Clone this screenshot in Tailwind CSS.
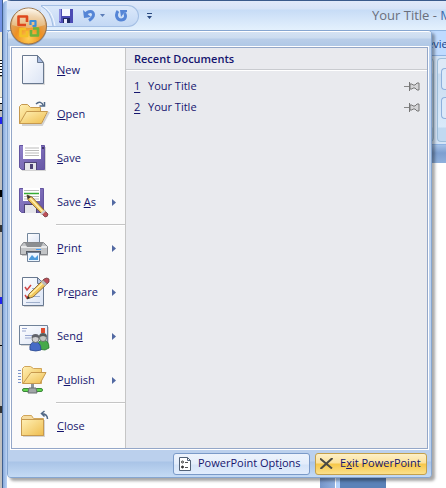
<!DOCTYPE html>
<html lang="en">
<head>
    <meta charset="UTF-8">
    <meta name="viewport" content="width=device-width, initial-scale=1.0">
    <title>Your Title - Microsoft PowerPoint</title>
    <script src="https://cdn.jsdelivr.net/npm/@tailwindcss/browser@4"></script>
</head>
<body class="relative h-screen overflow-hidden bg-white font-['Open_Sans','Noto_Sans',sans-serif] text-[11px] text-[#15156e]">
    <div class="flex h-full">
        <!-- Strip of the window behind -->
        <div class="flex w-[3px] shrink-0 flex-col overflow-hidden border-r border-[#3f5f8f] bg-[#c0c0c0]">
            <div class="h-[32px] shrink-0 bg-[#7393e6]"></div>
            <div class="h-[28px] shrink-0 bg-[#ece9d8]"></div>
            <div class="h-[16px] shrink-0 bg-[repeating-linear-gradient(#111_0_1px,#fff_1px_3px)]"></div>
            <div class="h-[22px] shrink-0 border-y border-[#aca899] bg-[#ece9d8]"></div>
            <div class="h-[5px] shrink-0 bg-white"></div>
            <div class="h-[8px] shrink-0 border-y border-black"></div>
            <div class="mt-[6px] h-[7px] shrink-0 bg-[#2222ee]"></div>
            <div class="mt-[66px] h-[7px] shrink-0 bg-black"></div>
            <div class="mt-[28px] h-[7px] shrink-0 bg-[#333]"></div>
            <div class="mt-[65px] h-[7px] shrink-0 bg-[#2222ee]"></div>
            <div class="mt-[41px] h-px shrink-0 bg-black"></div>
            <div class="mt-[60px] h-[7px] shrink-0 bg-[#333]"></div>
        </div>

        <!-- PowerPoint window -->
        <div class="flex min-w-0 flex-1 rounded-tl-lg border-t border-[#3a5a8c]">
            <div class="w-[4px] shrink-0 rounded-tl-lg bg-[linear-gradient(90deg,#88a9da,#bcd4f5)]"></div>
            <div class="flex min-w-0 flex-1 flex-col">
                <header class="flex h-[30px] shrink-0 items-center overflow-hidden border-b border-[#8fb4df] bg-[linear-gradient(#e1e9fa_0,#d6e3f8_8px,#c7dcf6_9px,#e4f1fd_100%)]">
                    <div class="ml-[34px] flex h-[22px] items-center gap-[10px] rounded-r-full border border-l-0 border-[#a4bfe4] bg-[linear-gradient(#dbe8fa,#c3d8f4)] pr-[10px]">
                        <svg class="-mr-[10px] h-[20px] w-[18px]" viewBox="0 0 18 20" fill="none">
                            <path d="M0 0q10 5 12 20H0z" fill="#dce8fa"/>
                            <path d="M0 0q10 5 12 20" stroke="#9fbbe2"/>
                            <path d="M2 0q10 5 12 20" stroke="#f3f8ff"/>
                        </svg>
                        <button type="button" aria-label="Save">
                            <svg class="size-[14px]" viewBox="0 0 14 14">
                                <path d="M0 0h14v14H1L0 13z" fill="#4b4bb4"/>
                                <path d="M0 0h2v13l-2-1z" fill="#8d8ee0"/>
                                <path d="M3 0h8v7H3z" fill="#f7f9ff"/>
                                <path d="M4 9h7v5H4z" fill="#1f2a63"/>
                                <path d="M5 10h3v4H5z" fill="#eef"/>
                            </svg>
                        </button>
                        <button type="button" aria-label="Undo" class="flex items-center gap-[4px]">
                            <svg class="size-[13px]" viewBox="0 0 13 13" fill="none">
                                <path d="M2 6C5 1.500 10.500 1.500 10.500 5.500C10.500 8 9 9.500 6 11.500" stroke="#5585d6" stroke-width="3"/>
                                <path d="M0 1l1 8 7-1z" fill="#5585d6"/>
                            </svg>
                            <svg class="h-[3px] w-[5px]" viewBox="0 0 5 3"><path d="M0 0h5L2.500 3z" fill="#5b7cb8"/></svg>
                        </button>
                        <button type="button" aria-label="Repeat">
                            <svg class="size-[13px]" viewBox="0 0 13 13" fill="none">
                                <path d="M3 2C0 6 2 11 6 11C10.500 11 11.500 7 9.500 4" stroke="#5585d6" stroke-width="3"/>
                                <path d="M5 1h7v2l-3 1-3 4z" fill="#5585d6"/>
                            </svg>
                        </button>
                    </div>
                    <button type="button" aria-label="Customize toolbar" class="ml-[8px]">
                        <svg class="h-[6px] w-[5px]" viewBox="0 0 5 6"><path d="M0 0h5v1H0zM0 3h5L2.500 6z" fill="#2a4a80"/></svg>
                    </button>
                    <h1 class="ml-auto w-[74px] overflow-hidden text-[13px] whitespace-nowrap text-[#6a6f7c]">Your Title - <span class="text-[#3e6aaa]">M</span></h1>
                </header>
                <nav class="flex h-[24px] shrink-0 items-center justify-end bg-[#bfdbff] pt-[2px]">
                    <a href="#" class="w-[19px] overflow-hidden whitespace-nowrap text-[#15428b]">eview</a>
                </nav>
                <!-- Ribbon -->
                <div class="flex h-[90px] shrink-0 justify-end gap-[3px] border-y border-[#8db2e3] bg-[#d3e4f7] py-[2px]">
                    <div class="flex-1 rounded-r-sm border border-[#9ebfdb] bg-[linear-gradient(#dde9f7_0,#dde9f7_14px,#c9dcf0_15px,#d9eafa_68px,#c0d9f1_69px)]"></div>
                    <div class="flex w-[9px] flex-col gap-[7px] rounded-l-sm border border-r-0 border-[#9ebfdb] bg-[linear-gradient(#dde9f7_0,#dde9f7_14px,#c9dcf0_15px,#d9eafa_68px,#c0d9f1_69px)] pt-[9px] pl-[3px]">
                        <button type="button" aria-label="Font" class="h-[22px] rounded-l-sm border border-r-0 border-[#8fb0dc] bg-[#dce9f9]"></button>
                        <button type="button" aria-label="Paragraph" class="h-[22px] rounded-l-sm border border-r-0 border-[#8fb0dc] bg-[#dce9f9]"></button>
                    </div>
                </div>
                <div class="h-[18px] shrink-0 bg-[linear-gradient(#a4c2e8,#7d9fd0_8px,#8fb0dc)]"></div>
                <main class="flex flex-1 flex-col justify-end">
                    <div class="flex h-[12px] justify-end pr-[60px]">
                        <div class="w-[15px] bg-[linear-gradient(90deg,#7595c8,#90b0df)]"></div>
                        <div class="w-[5px] border-l border-white bg-[#b3d2fb]"></div>
                        <div class="w-[46px] bg-[#5b82b8]"></div>
                    </div>
                </main>
            </div>
        </div>
    </div>

    <!-- Office menu -->
    <section class="absolute top-[30px] right-[14px] left-[7px] flex flex-col rounded-[4px] border border-[#86a6d0] bg-[#bdd2ee] shadow-[3px_3px_3px_rgba(0,0,0,0.35)]">
        <div class="h-[15px] rounded-t-[3px] border-t border-white bg-[linear-gradient(#d4e2f3_0,#cbdcf0_6px,#b9cee9_7px,#b0c8e6_100%)]"></div>
        <div class="mx-[2px] border border-white">
            <div class="flex border border-[#94a7c8]">
                <ul class="w-[114px] shrink-0 border-r border-[#c5c5c5] bg-[#fafafa]">
                    <li><button type="button" class="flex h-[44px] w-full items-center gap-[7px] pl-[6px]">
                        <svg class="size-[32px]" viewBox="0 0 32 32">
                            <defs>
                                <linearGradient id="paper" x1="0" y1="0" x2="1" y2="1"><stop offset="0" stop-color="#fff"/><stop offset="1" stop-color="#dbe4f5"/></linearGradient>
                                <linearGradient id="folder" x1="0" y1="0" x2="1" y2="1"><stop offset="0" stop-color="#fff0b5"/><stop offset="1" stop-color="#eebd4e"/></linearGradient>
                                <linearGradient id="disk" x1="0" y1="0" x2="1" y2="1"><stop offset="0" stop-color="#9182cb"/><stop offset="1" stop-color="#6656a4"/></linearGradient>
                            </defs>
                            <path d="M5 3h15l7 7v21H5z" fill="#aaa" opacity=".4"/>
                            <path d="M4.500 1.500h15l6 7v21h-21z" fill="url(#paper)" stroke="#68788f"/>
                            <path d="M19.500 1.500v7h6z" fill="#a8bbe0" stroke="#68788f"/>
                        </svg>
                        <span><u>N</u>ew</span>
                    </button></li>
                    <li><button type="button" class="flex h-[44px] w-full items-center gap-[7px] pl-[6px]">
                        <svg class="size-[32px]" viewBox="0 0 32 32">
                            <path d="M4 27h20l7-13" fill="none" stroke="#aaa" stroke-width="2" opacity=".5"/>
                            <path d="M1.500 25.500v-17l2-2h6l3 3h10v16z" fill="url(#folder)" stroke="#c6994e"/>
                            <path d="M1.500 25.500l7-12h21l-6 12z" fill="url(#folder)" stroke="#c6994e"/>
                            <path d="M18 6c3-3 6-2 7.500 2" fill="none" stroke="#526987" stroke-width="1.500"/>
                            <path d="M21.500 8h5V4" fill="none" stroke="#526987" stroke-width="1.500"/>
                        </svg>
                        <span><u>O</u>pen</span>
                    </button></li>
                    <li><button type="button" class="flex h-[44px] w-full items-center gap-[7px] pl-[6px]">
                        <svg class="size-[32px]" viewBox="0 0 32 32">
                            <path d="M4 5h24v24H4z" fill="#999" opacity=".4"/>
                            <path d="M1.500 3.500h25v24h-23l-2-2z" fill="url(#disk)" stroke="#6455a0"/>
                            <path d="M5 3h18v14H5z" fill="#fff"/>
                            <path d="M7 6h14M7 8.500h14M7 11h14M7 13.500h14" stroke="#bbb"/>
                            <path d="M6 20h13v8H6z" fill="#4e4375"/>
                            <path d="M7 21h11v7H7z" fill="#e5e5ea"/>
                            <path d="M12 22h3v5h-3z" fill="#4e4375"/>
                            <path d="M24 5h2v2h-2z" fill="#40356b"/>
                        </svg>
                        <span><u>S</u>ave</span>
                    </button></li>
                    <li><button type="button" class="flex h-[44px] w-full items-center gap-[7px] pl-[6px]">
                        <svg class="size-[32px]" viewBox="0 0 32 32">
                            <path d="M1.500 2.500h24v24h-22l-2-2z" fill="url(#disk)" stroke="#6455a0"/>
                            <path d="M5 2h17v13H5z" fill="#fff"/>
                            <path d="M6 7.500h15" stroke="#35ac35" stroke-width="1.500"/>
                            <path d="M6 4.500h15M6 10.500h15M6 13h15" stroke="#bbb"/>
                            <path d="M6 18h13v9H6z" fill="#4e4375"/>
                            <path d="M7 19h11v8H7z" fill="#e5e5ea"/>
                            <path d="M9 9l5 2 14 15-3 3L10 14z" fill="#edc35c" stroke="#75572c" stroke-width=".8"/>
                            <path d="M12 12l14 15" stroke="#fff0ad" stroke-width="1.500"/>
                            <path d="M9 9l1 4 3-2z" fill="#333"/>
                            <path d="M27 25l3 3q0 3-3 3l-3-3z" fill="#bd4f58" stroke="#713f43" stroke-width=".8"/>
                            <path d="M26 24l-4 4 2 1 4-4z" fill="#ccc"/>
                        </svg>
                        <span>Save <u>A</u>s</span>
                        <svg class="mr-[9px] ml-auto h-[7px] w-[4px]" viewBox="0 0 4 7"><path d="M0 0l4 3.500L0 7z" fill="#5269a2"/></svg>
                    </button></li>
                    <li class="ml-[44px] h-[2px] border-t border-[#c5c5c5] bg-white"></li>
                    <li><button type="button" class="flex h-[44px] w-full items-center gap-[7px] pl-[6px]">
                        <svg class="size-[32px]" viewBox="0 0 32 32">
                            <path d="M4 22h26v2H4z" fill="#999" opacity=".5"/>
                            <path d="M9.500 1.500h12v10h-12z" fill="url(#paper)" stroke="#72869c"/>
                            <path d="M5.500 10.500h20l4 4v8h-27v-8z" fill="#c2c4c6" stroke="#85878b"/>
                            <path d="M3 14h26v2H3z" fill="#e8e9ea"/>
                            <path d="M7 11h18l-2 4H9z" fill="#8b8e92"/>
                            <path d="M8 19h15v3H8z" fill="#555a62"/>
                            <path d="M18 17h5v1h-5z" fill="#3d9cff"/>
                            <path d="M9.500 20.500h12v9h-12z" fill="#eaf5ff" stroke="#738399"/>
                            <path d="M11 27l3-4 3 3 3-3v5h-9z" fill="#4b9bdc"/>
                        </svg>
                        <span><u>P</u>rint</span>
                        <svg class="mr-[9px] ml-auto h-[7px] w-[4px]" viewBox="0 0 4 7"><path d="M0 0l4 3.500L0 7z" fill="#5269a2"/></svg>
                    </button></li>
                    <li><button type="button" class="flex h-[44px] w-full items-center gap-[7px] pl-[6px]">
                        <svg class="size-[32px]" viewBox="0 0 32 32">
                            <path d="M6 4h20v27H6z" fill="#999" opacity=".4"/>
                            <path d="M4.500 1.500h15l6 6v22h-21z" fill="url(#paper)" stroke="#68788f"/>
                            <path d="M19.500 1.500v6h6z" fill="#b8c8e7" stroke="#68788f"/>
                            <path d="M7 11l2 3 4-5M7 19l2 3 4-5" fill="none" stroke="#d14343" stroke-width="1.500"/>
                            <path d="M14 12.500h8M14 20.500h8M8 26.500h14" stroke="#a0b0cc"/>
                            <path d="M9 23l2-5L25 4l4 4-14 13z" fill="#f1c75c" stroke="#75572c" stroke-width=".8"/>
                            <path d="M12 19L26 6" stroke="#fff0ad" stroke-width="1.500"/>
                            <path d="M9 23l1-3 2 2z" fill="#222"/>
                            <path d="M26 3q3-2 5 0v3l-2 2-4-4z" fill="#bd4f58" stroke="#713f43" stroke-width=".8"/>
                            <path d="M25 4l4 4-2 2-4-4z" fill="#bbb"/>
                        </svg>
                        <span>Pr<u>e</u>pare</span>
                        <svg class="mr-[9px] ml-auto h-[7px] w-[4px]" viewBox="0 0 4 7"><path d="M0 0l4 3.500L0 7z" fill="#5269a2"/></svg>
                    </button></li>
                    <li><button type="button" class="flex h-[44px] w-full items-center gap-[7px] pl-[6px]">
                        <svg class="size-[32px]" viewBox="0 0 32 32">
                            <path d="M3 7h28v19H3z" fill="#999" opacity=".4"/>
                            <path d="M1.500 5.500h28v19h-28z" fill="url(#paper)" stroke="#708299"/>
                            <path d="M4 8.500h5M4 11h4M7 15.500h8M7 18h6" stroke="#98a6cf"/>
                            <path d="M23 8h4v5h-4z" fill="#df4c2e"/>
                            <path d="M20 29q-1-9 5-9t6 8l-4 2z" fill="#46a94a" stroke="#28752e" stroke-width=".8"/>
                            <circle cx="25" cy="18" r="3.500" fill="#c2c5c2" stroke="#5e6360" stroke-width=".8"/>
                            <path d="M21 17q0-4 4-4t4 4l-4-1z" fill="#555d5b"/>
                            <path d="M12 30q-1-8 5-8t6 8q-5 2-11 0z" fill="#456bc6" stroke="#29478e" stroke-width=".8"/>
                            <circle cx="17.500" cy="19" r="3.500" fill="#d0d0d2" stroke="#5e6360" stroke-width=".8"/>
                            <path d="M13.500 18q0-4 4-4t4 4l-4-1z" fill="#60636b"/>
                        </svg>
                        <span>Sen<u>d</u></span>
                        <svg class="mr-[9px] ml-auto h-[7px] w-[4px]" viewBox="0 0 4 7"><path d="M0 0l4 3.500L0 7z" fill="#5269a2"/></svg>
                    </button></li>
                    <li><button type="button" class="flex h-[44px] w-full items-center gap-[7px] pl-[6px]">
                        <svg class="size-[32px]" viewBox="0 0 32 32">
                            <path d="M0 6.500h3M0 9.500h3M0 12.500h3M0 15.500h3M0 18.500h3" stroke="#7993c9"/>
                            <path d="M4.500 19.500v-15l2-2h6l3 2h8v15z" fill="url(#folder)" stroke="#d0a55a"/>
                            <path d="M5 19.500l8-11h15l-6 11z" fill="url(#folder)" stroke="#c6994e"/>
                            <path d="M13 20h3v5h-3z" fill="#8c9499"/>
                            <rect x="4.500" y="24.500" width="20" height="3" rx="1.500" fill="#61d44f" stroke="#3c873a"/>
                            <path d="M11 24h7l1 5h-9z" fill="#a1a6a8" stroke="#6a7073"/>
                        </svg>
                        <span>P<u>u</u>blish</span>
                        <svg class="mr-[9px] ml-auto h-[7px] w-[4px]" viewBox="0 0 4 7"><path d="M0 0l4 3.500L0 7z" fill="#5269a2"/></svg>
                    </button></li>
                    <li class="ml-[44px] h-[2px] border-t border-[#c5c5c5] bg-white"></li>
                    <li><button type="button" class="flex h-[44px] w-full items-center gap-[7px] pl-[6px]">
                        <svg class="size-[32px]" viewBox="0 0 32 32">
                            <path d="M5 10h22v17H5z" fill="#999" opacity=".4"/>
                            <path d="M3.500 25.500v-18l2-2h8l2 3h10v17z" fill="#f6dca0" stroke="#d0a55a"/>
                            <path d="M3.500 9.500h22v16h-22z" fill="url(#folder)" stroke="#c6994e"/>
                            <path d="M29.500 9q0-5-6-5.500M26.500 1l-3 2.500 3 3" fill="none" stroke="#526987" stroke-width="1.500"/>
                        </svg>
                        <span><u>C</u>lose</span>
                    </button></li>
                </ul>

                <div class="min-w-0 flex-1 bg-[#e9eaee]">
                    <h2 class="h-[22px] border-b border-[#c9cbcf] pl-[8px] leading-[22px] font-semibold">Recent Documents</h2>
                    <ol class="border-t border-white pt-[5px]">
                        <li><a href="#" class="flex h-[21px] items-center pr-[7px] pl-[8px]">
                            <u class="w-[14px] underline-offset-2">1</u>
                            <span>Your Title</span>
                            <svg class="ml-auto h-[9px] w-[16px]" viewBox="0 0 16 9" fill="none">
                                <path d="M0 4.500h5" stroke="#888"/>
                                <path d="M5.500 0v9M6 2h2l1 1h2l2-2h2v7h-2l-2-2H9L8 7H6z" fill="#d4d4d6" stroke="#777"/>
                            </svg>
                        </a></li>
                        <li><a href="#" class="flex h-[21px] items-center pr-[7px] pl-[8px]">
                            <u class="w-[14px] underline-offset-2">2</u>
                            <span>Your Title</span>
                            <svg class="ml-auto h-[9px] w-[16px]" viewBox="0 0 16 9" fill="none">
                                <path d="M0 4.500h5" stroke="#888"/>
                                <path d="M5.500 0v9M6 2h2l1 1h2l2-2h2v7h-2l-2-2H9L8 7H6z" fill="#d4d4d6" stroke="#777"/>
                            </svg>
                        </a></li>
                    </ol>
                </div>
            </div>
        </div>
        <footer class="flex h-[27px] items-center justify-end gap-[5px] rounded-b-[3px] bg-[linear-gradient(#bbd0ed_0,#bbd0ed_11px,#a9c4e7_12px,#c4daf4_100%)] pr-[4px]">
            <button type="button" class="flex h-[22px] w-[137px] items-center gap-[7px] rounded-[3px] border border-[#7a9ac8] bg-[linear-gradient(#edf3fc_0,#e3edfb_10px,#d5e4f8_11px,#e2edfc_100%)] pl-[5px] whitespace-nowrap">
                <svg class="h-[14px] w-[12px] shrink-0" viewBox="0 0 12 14" fill="none">
                    <path d="M.5.5h8l3 3v10H.5z" fill="#fff" stroke="#526278"/>
                    <path d="M8.500.5v3h3" stroke="#526278"/>
                    <circle cx="3.500" cy="5" r="1" stroke="#333"/>
                    <circle cx="3.500" cy="10" r="1" fill="#333" stroke="#333"/>
                    <path d="M6 5.500h3M6 10.500h3" stroke="#555"/>
                </svg>
                <span>PowerPoint Opt<u>i</u>ons</span>
            </button>
            <button type="button" class="flex h-[22px] w-[112px] items-center gap-[7px] rounded-[3px] border border-[#c3a04c] bg-[linear-gradient(#fdf0c8_0,#fbe19b_9px,#f6c748_10px,#fbe08c_100%)] pl-[4px] whitespace-nowrap">
                <svg class="h-[11px] w-[13px] shrink-0" viewBox="0 0 13 11"><path d="M0 .5L12 10.500M12.500 0L.5 11" stroke="#4a4a44" stroke-width="2"/></svg>
                <span>E<u>x</u>it PowerPoint</span>
            </button>
        </footer>
    </section>

    <!-- Office button, floats over the title bar and the menu -->
    <button type="button" aria-label="Office Button" class="absolute top-[7px] left-[9px]">
        <svg class="size-[39px]" viewBox="0 0 39 39">
            <defs>
                <radialGradient id="orb" cx=".5" cy=".85" r=".8">
                    <stop offset="0" stop-color="#ffcf55"/><stop offset=".45" stop-color="#ee9022"/><stop offset=".8" stop-color="#dca66a"/><stop offset="1" stop-color="#f3e3cd"/>
                </radialGradient>
                <linearGradient id="gloss" x1="0" y1="0" x2="0" y2="1"><stop offset="0" stop-color="#fffaf0"/><stop offset="1" stop-color="#e5bc82"/></linearGradient>
            </defs>
            <circle cx="19.500" cy="20" r="18.500" fill="#5f6f8a" opacity=".55"/>
            <circle cx="19.500" cy="19" r="18" fill="url(#orb)" stroke="#9c7346"/>
            <path d="M3 18a16.500 16.500 0 0 1 33 0q-16 6-33 0z" fill="url(#gloss)" opacity=".8"/>
            <g fill="none" stroke-width="2.600" stroke-linejoin="round">
                <path d="M17 18H9.500V9.500H18V15" stroke="#df481d"/>
                <path d="M21.500 18v-4h5v5h-3" stroke="#3b8ed8" stroke-width="2.200"/>
                <path d="M17 22h-5.500v7H18v-5" stroke="#f3c127"/>
                <path d="M22 23v5.500h7V21.500h-5" stroke="#6db33c"/>
            </g>
        </svg>
    </button>
</body>
</html>
